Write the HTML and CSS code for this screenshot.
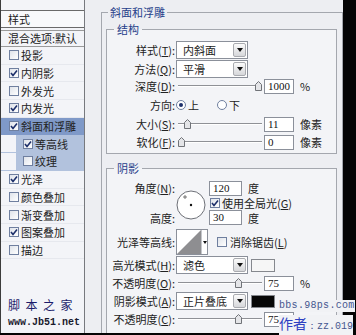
FILE: index.html
```html
<!DOCTYPE html>
<html lang="zh">
<head>
    <meta charset="UTF-8">
    <title>图层样式 - 斜面和浮雕</title>
    <link rel="stylesheet" href="styles.css">
</head>
<body>
    <div class="window">
        <!-- effect list -->
        <div class="sidebar">
            <div class="side-head">样式</div>
            <div class="side-blend">混合选项:默认</div>
            <ul class="effects">
                <li><span class="cb"></span>投影</li>
                <li><span class="cb on"><svg viewBox="0 0 8 8"><polyline points="1,4 3,6.5 7,1.5"/></svg></span>内阴影</li>
                <li><span class="cb"></span>外发光</li>
                <li><span class="cb on"><svg viewBox="0 0 8 8"><polyline points="1,4 3,6.5 7,1.5"/></svg></span>内发光</li>
                <li class="sel"><span class="cb on"><svg viewBox="0 0 8 8"><polyline points="1,4 3,6.5 7,1.5"/></svg></span>斜面和浮雕</li>
                <li class="sub"><span class="cb on"><svg viewBox="0 0 8 8"><polyline points="1,4 3,6.5 7,1.5"/></svg></span>等高线</li>
                <li class="sub"><span class="cb"></span>纹理</li>
                <li><span class="cb on"><svg viewBox="0 0 8 8"><polyline points="1,4 3,6.5 7,1.5"/></svg></span>光泽</li>
                <li><span class="cb"></span>颜色叠加</li>
                <li><span class="cb"></span>渐变叠加</li>
                <li><span class="cb on"><svg viewBox="0 0 8 8"><polyline points="1,4 3,6.5 7,1.5"/></svg></span>图案叠加</li>
                <li><span class="cb"></span>描边</li>
            </ul>
            <div class="site">
                <div class="site-name">脚本之家</div>
                <div class="site-url">www.Jb51.net</div>
            </div>
        </div>

        <div class="main">
            <fieldset class="group">
                <legend>斜面和浮雕</legend>

                <fieldset class="box structure">
                    <legend>结构</legend>
                    <div class="row r-style">
                        <span class="lbl">样式(<u>T</u>):</span>
                        <div class="select">内斜面<span class="arrow"></span></div>
                    </div>
                    <div class="row r-method">
                        <span class="lbl">方法(<u>Q</u>):</span>
                        <div class="select">平滑<span class="arrow"></span></div>
                    </div>
                    <div class="row r-depth">
                        <span class="lbl">深度(<u>D</u>):</span>
                        <div class="slider">
                            <span class="track" style="width: 77px;"></span>
                            <svg class="thumb" viewBox="0 0 7 10"><polygon points="0.5,3.5 3.5,0.5 6.5,3.5 6.5,9.5 0.5,9.5"/></svg>
                            <span class="track rest"></span>
                        </div>
                        <span class="num">1000</span>
                        <span class="unit">%</span>
                    </div>
                    <div class="row r-dir">
                        <span class="lbl">方向:</span>
                        <span class="radio on"></span><span class="opt">上</span>
                        <span class="radio"></span><span class="opt">下</span>
                    </div>
                    <div class="row r-size">
                        <span class="lbl">大小(<u>S</u>):</span>
                        <div class="slider">
                            <span class="track" style="width: 6px;"></span>
                            <svg class="thumb" viewBox="0 0 7 10"><polygon points="0.5,3.5 3.5,0.5 6.5,3.5 6.5,9.5 0.5,9.5"/></svg>
                            <span class="track rest"></span>
                        </div>
                        <span class="num">11</span>
                        <span class="unit">像素</span>
                    </div>
                    <div class="row r-soft">
                        <span class="lbl">软化(<u>F</u>):</span>
                        <div class="slider">
                            <span class="track" style="width: 0px;"></span>
                            <svg class="thumb" viewBox="0 0 7 10"><polygon points="0.5,3.5 3.5,0.5 6.5,3.5 6.5,9.5 0.5,9.5"/></svg>
                            <span class="track rest"></span>
                        </div>
                        <span class="num">0</span>
                        <span class="unit">像素</span>
                    </div>
                </fieldset>

                <fieldset class="box shading">
                    <legend>阴影</legend>
                    <div class="angle">
                        <span class="lbl a-lbl">角度(<u>N</u>):</span>
                        <svg class="dial" viewBox="0 0 30 30">
                            <circle cx="15" cy="15" r="14" />
                            <line class="cross" x1="7" y1="7" x2="11" y2="7" />
                            <line class="cross" x1="9" y1="5" x2="9" y2="9" />
                            <circle class="dot" cx="15" cy="15" r="1.2" />
                        </svg>
                        <div class="a-val"><span class="num">120</span><span class="unit">度</span></div>
                        <div class="a-global"><span class="cb on"><svg viewBox="0 0 8 8"><polyline points="1,4 3,6.5 7,1.5"/></svg></span>使用全局光(<u>G</u>)</div>
                        <span class="lbl h-lbl">高度:</span>
                        <div class="h-val"><span class="num">30</span><span class="unit">度</span></div>
                    </div>
                    <div class="row r-contour">
                        <span class="lbl">光泽等高线:</span>
                        <div class="contour">
                            <svg viewBox="0 0 24 24"><polygon points="0,24 24,0 24,24"/></svg>
                            <span class="c-arrow"></span>
                        </div>
                        <span class="cb"></span><span class="opt">消除锯齿(<u>L</u>)</span>
                    </div>
                    <div class="row r-mode">
                        <span class="lbl">高光模式(<u>H</u>):</span>
                        <div class="select">滤色<span class="arrow"></span></div>
                        <span class="swatch light"></span>
                    </div>
                    <div class="row r-opacity">
                        <span class="lbl">不透明度(<u>O</u>):</span>
                        <div class="slider">
                            <span class="track" style="width: 57px;"></span>
                            <svg class="thumb" viewBox="0 0 7 10"><polygon points="0.5,3.5 3.5,0.5 6.5,3.5 6.5,9.5 0.5,9.5"/></svg>
                            <span class="track rest"></span>
                        </div>
                        <span class="num">75</span>
                        <span class="unit">%</span>
                    </div>
                    <div class="row r-mode">
                        <span class="lbl">阴影模式(<u>A</u>):</span>
                        <div class="select">正片叠底<span class="arrow"></span></div>
                        <span class="swatch dark"></span>
                    </div>
                    <div class="row r-opacity">
                        <span class="lbl">不透明度(<u>C</u>):</span>
                        <div class="slider">
                            <span class="track" style="width: 57px;"></span>
                            <svg class="thumb" viewBox="0 0 7 10"><polygon points="0.5,3.5 3.5,0.5 6.5,3.5 6.5,9.5 0.5,9.5"/></svg>
                            <span class="track rest"></span>
                        </div>
                        <span class="num">75</span>
                    </div>
                </fieldset>
            </fieldset>
        </div>
    </div>

    <!-- watermarks over the screenshot -->
    <div class="mark mark-bbs">bbs.98ps.com</div>
    <div class="mark mark-author"><span class="big">作者</span>：zz.019</div>
</body>
</html>
```

FILE: styles.css
```css
* {
    box-sizing: border-box;
}
body {
    margin: 0;
    width: 356px;
    height: 335px;
    overflow: hidden;
    position: relative;
    background: #050505;
    font-family: "Noto Sans CJK SC", "Noto Sans", sans-serif;
    font-size: 11px;
    color: #222;
}
u {
    text-decoration: underline;
    text-underline-offset: 1px;
}
.window {
    display: flex;
    width: 343px;
    height: 333px;
    background: #edeef2;
    border-left: 1px solid #3c3c3c;
    overflow: hidden;
}

/* left list */
.sidebar {
    width: 84px;
    flex: none;
    display: flex;
    flex-direction: column;
    background: #f3f4f8;
    border-right: 1px solid #77797e;
    padding-top: 10px;
}
.side-head {
    height: 18px;
    line-height: 16px;
    padding-left: 7px;
    border-top: 1px solid #6a6a6a;
    border-bottom: 1px solid #6a6a6a;
    background: #f8f9fb;
}
.side-blend {
    margin-top: 2px;
    height: 17px;
    line-height: 15px;
    padding-left: 7px;
    border-top: 1px solid #9a9a9a;
    border-bottom: 1px solid #9a9a9a;
    white-space: nowrap;
}
.effects {
    list-style: none;
    margin: 0;
    padding: 0;
}
.effects li {
    height: 17.7px;
    display: flex;
    align-items: center;
    padding-left: 8px;
    border-bottom: 1px solid #e6e8ee;
    white-space: nowrap;
}
.effects li.sel {
    background: #7f99c8;
    border-bottom-color: #7f99c8;
}
.effects li.sub {
    padding-left: 22px;
    background: linear-gradient(to right, #f3f4f8 15px, #b2c2dd 15px);
    border-bottom-color: #b2c2dd;
}
.cb {
    width: 10px;
    height: 10px;
    flex: none;
    margin-right: 2px;
    border: 1px solid #6f7f9f;
    background: linear-gradient(135deg, #dfe3ea, #ffffff);
    display: inline-flex;
    align-items: center;
    justify-content: center;
}
.cb svg {
    width: 8px;
    height: 8px;
}
.cb polyline {
    fill: none;
    stroke: #1d2f6a;
    stroke-width: 1.6;
}
.site {
    margin-top: auto;
    padding: 0 0 2px 7px;
    color: #1b1b6a;
}
.site-name {
    font-size: 12px;
    letter-spacing: 5.5px;
    line-height: 18px;
}
.site-url {
    font-family: "Liberation Mono", monospace;
    font-size: 10px;
    line-height: 17px;
    color: #1a1a2e;
    font-weight: bold;
}

/* right panel */
.main {
    flex: 1;
    padding: 5px 0 0 16px;
    overflow: hidden;
}
fieldset {
    margin: 0;
    min-width: 0;
}
legend {
    line-height: 14px;
    color: #26408a;
}
.group {
    height: 360px;
    padding: 0 5px 0 4px;
    border: 1px solid #a4a7ae;
}
.group > legend {
    margin-left: 2px;
    padding: 0 2px;
}
.box {
    margin-top: 3px;
    border: 1px solid #a4a7ae;
    background: #f3f4f7;
}
.box > legend {
    margin-left: 7px;
    padding: 0 3px;
}
.structure {
    padding: 4px 0 2px;
}
.shading {
    margin-top: 7px;
    padding: 5px 0 30px;
}
.row {
    display: flex;
    align-items: center;
    height: 19px;
    white-space: nowrap;
}
.lbl {
    width: 69px;
    flex: none;
    text-align: right;
    padding-right: 1px;
}
.r-depth { height: 16px; }
.r-dir { height: 21px; }
.r-size,
.r-soft,
.r-mode,
.r-opacity { height: 18px; }
.select {
    width: 72px;
    height: 18px;
    flex: none;
    display: flex;
    align-items: center;
    padding: 0 1px 0 6px;
    background: #fff;
    border: 1px solid #8b909a;
}
.arrow {
    margin-left: auto;
    width: 13px;
    height: 14px;
    border: 1px solid #a9abb0;
    border-radius: 2px;
    background: linear-gradient(#fbfbfb, #d6d7da);
    display: flex;
    align-items: center;
    justify-content: center;
}
.arrow::after {
    content: "";
    border-top: 4px solid #111;
    border-left: 3px solid transparent;
    border-right: 3px solid transparent;
}
.slider {
    width: 86px;
    flex: none;
    display: flex;
    align-items: center;
    padding-left: 2px;
    height: 12px;
}
.track {
    height: 2px;
    flex: none;
    border-top: 1px solid #8f9196;
    border-bottom: 1px solid #ffffff;
}
.track.rest {
    flex: 1;
}
.thumb {
    width: 7px;
    height: 10px;
    flex: none;
}
.thumb polygon {
    fill: #e4e5e8;
    stroke: #707378;
    stroke-width: 1;
}
.num {
    width: 30px;
    height: 15px;
    flex: none;
    margin-left: 2px;
    padding-left: 3px;
    background: #fff;
    border: 1px solid #8b909a;
    font-family: "Liberation Serif", serif;
    font-size: 11px;
    line-height: 13px;
    color: #111;
}
.unit {
    margin-left: 6px;
}
.radio {
    width: 10px;
    height: 10px;
    flex: none;
    border-radius: 50%;
    border: 1px solid #6f7f9f;
    background: #fff;
    display: inline-flex;
    align-items: center;
    justify-content: center;
}
.radio.on::after {
    content: "";
    width: 4px;
    height: 4px;
    border-radius: 50%;
    background: #1d2f6a;
}
.opt {
    margin-left: 2px;
    margin-right: 18px;
}

/* angle / altitude block */
.angle {
    display: grid;
    grid-template-columns: 69px 33px auto;
    grid-template-rows: 16px 13px 17px;
    align-items: center;
    white-space: nowrap;
}
.a-lbl { grid-column: 1; grid-row: 1; }
.h-lbl { grid-column: 1; grid-row: 3; }
.dial {
    grid-column: 2;
    grid-row: 1 / 4;
    align-self: start;
    width: 30px;
    height: 30px;
    margin: 10px 0 0 0;
}
.dial circle {
    fill: #fff;
    stroke: #6d7077;
    stroke-width: 1;
}
.dial .dot {
    fill: #111;
    stroke: none;
}
.dial .cross {
    stroke: #555;
    stroke-width: 0.8;
}
.a-val,
.h-val {
    display: flex;
    align-items: center;
}
.a-val { grid-column: 3; grid-row: 1; }
.h-val { grid-column: 3; grid-row: 3; }
.a-val .num,
.h-val .num {
    width: 33px;
    margin-left: 0;
}
.a-global {
    grid-column: 3;
    grid-row: 2;
    display: flex;
    align-items: center;
    margin-left: 1px;
}
.r-contour {
    height: 28px;
    margin-top: 2px;
}
.contour {
    width: 32px;
    height: 26px;
    flex: none;
    display: flex;
    border: 1px solid #8b909a;
    background: #fff;
    margin-right: 9px;
}
.contour svg {
    width: 24px;
    height: 24px;
}
.contour polygon {
    fill: #8e8e91;
}
.c-arrow {
    flex: 1;
    display: flex;
    align-items: center;
    justify-content: center;
    border-left: 1px solid #c4c6cb;
}
.c-arrow::after {
    content: "";
    border-top: 3px solid #111;
    border-left: 2px solid transparent;
    border-right: 2px solid transparent;
}
.r-contour .opt {
    margin-left: 1px;
}
.swatch {
    width: 24px;
    height: 13px;
    flex: none;
    margin-left: 3px;
    border: 1px solid #85888e;
}
.swatch.light { background: #f6f6f6; }
.swatch.dark { background: #070707; }

/* watermarks */
.mark {
    position: absolute;
    white-space: nowrap;
    font-family: "Liberation Mono", monospace;
    font-size: 10px;
    color: #45568f;
    background: #f1f2f5;
}
.mark-bbs {
    left: 279px;
    top: 300px;
    line-height: 12px;
    letter-spacing: 0.3px;
}
.mark-author {
    left: 279px;
    top: 315px;
    line-height: 16px;
}
.mark-author .big {
    font-family: "Noto Sans CJK SC", sans-serif;
    font-size: 14px;
    color: #2e40c2;
}
```
